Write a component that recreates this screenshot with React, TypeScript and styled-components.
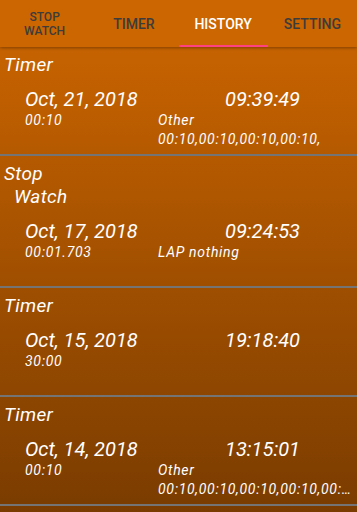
import React from 'react'
import styled, { createGlobalStyle } from 'styled-components'

const GlobalStyle = createGlobalStyle`
    html, body {
        margin: 0;
        padding: 0;
    }
    body {
        font-family: Roboto, 'Noto Sans', sans-serif;
    }
`

type Entry = {
    kind: string[]
    date: string
    time: string
    value: string
    note: string
    laps?: string
}

const entries: Entry[] = [
    {
        kind: ['Timer'],
        date: 'Oct, 21, 2018',
        time: '09:39:49',
        value: '00:10',
        note: 'Other',
        laps: '00:10,00:10,00:10,00:10,',
    },
    {
        kind: ['Stop', 'Watch'],
        date: 'Oct, 17, 2018',
        time: '09:24:53',
        value: '00:01.703',
        note: 'LAP nothing',
    },
    {
        kind: ['Timer'],
        date: 'Oct, 15, 2018',
        time: '19:18:40',
        value: '30:00',
        note: '',
    },
    {
        kind: ['Timer'],
        date: 'Oct, 14, 2018',
        time: '13:15:01',
        value: '00:10',
        note: 'Other',
        laps: '00:10,00:10,00:10,00:10,00:10,00:10,00:10,',
    },
]

const tabs = ['STOP\nWATCH', 'TIMER', 'HISTORY', 'SETTING']

const Page = styled.div`
    width: 100%;
    min-height: 100vh;
    background: linear-gradient(#cc6600 0%, #c26000 15%, #7a3c00 100%);
    overflow: hidden;
`

const TabBar = styled.div`
    display: grid;
    grid-template-columns: repeat(4, 1fr);
    height: 47px;
    background: #cc6600;
    box-shadow: 0 1px 3px rgba(0, 0, 0, 0.35);
    position: relative;
    z-index: 1;
`

const Tab = styled.div<{ $active?: boolean; $small?: boolean }>`
    display: flex;
    align-items: center;
    justify-content: center;
    text-align: center;
    white-space: pre-line;
    font-weight: 500;
    font-size: ${(p) => (p.$small ? '12px' : '14px')};
    line-height: ${(p) => (p.$small ? '14px' : '16px')};
    color: ${(p) => (p.$active ? '#ffffff' : '#3c3c3c')};
    border-bottom: 2px solid ${(p) => (p.$active ? '#ff4081' : 'transparent')};
    padding-top: 2px;
`

const Item = styled.div`
    padding: 6px 4px 5px 4px;
    border-bottom: 2px solid #747474;
    color: #ffffff;
    font-style: italic;
`

const Title = styled.div`
    font-size: 19px;
    line-height: 23px;
    letter-spacing: 0.3px;
`

const TitleLine = styled.div<{ $indent?: number }>`
    padding-left: ${(p) => p.$indent ?? 0}px;
`

const Details = styled.div`
    display: grid;
    grid-template-columns: 133px minmax(0, 1fr);
    padding-left: 21px;
    margin-top: 12px;
`

const Big = styled.div<{ $shift?: number }>`
    font-size: 20px;
    line-height: 23px;
    padding-left: ${(p) => p.$shift ?? 0}px;
    white-space: nowrap;
`

const Small = styled.div`
    font-size: 14px;
    line-height: 19px;
    letter-spacing: 0.7px;
    min-height: 19px;
    white-space: nowrap;
    overflow: hidden;
    text-overflow: ellipsis;
`

const App = () => {
    return (
        <Page>
            <GlobalStyle />
            <TabBar>
                {tabs.map((t, i) => (
                    <Tab key={t} $active={i === 2} $small={i === 0}>
                        {t}
                    </Tab>
                ))}
            </TabBar>
            {entries.map((e, i) => (
                <Item key={i}>
                    <Title>
                        {e.kind.map((k, j) => (
                            <TitleLine key={k} $indent={j * 10}>
                                {k}
                            </TitleLine>
                        ))}
                    </Title>
                    <Details>
                        <Big>{e.date}</Big>
                        <Big $shift={67}>{e.time}</Big>
                        <Small>{e.value}</Small>
                        <Small>{e.note}</Small>
                        <Small />
                        <Small>{e.laps ?? ''}</Small>
                    </Details>
                </Item>
            ))}
        </Page>
    )
}

export default App
